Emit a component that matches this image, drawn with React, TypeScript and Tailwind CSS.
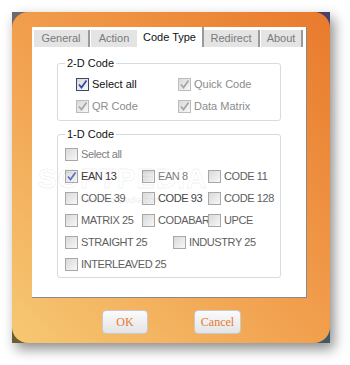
import React from "react";

type Box = "off" | "on" | "dim" | "soft";

function Check({ state }: { state: Box }) {
  const border =
    state === "on" ? "border-[#3c4a63]" : state === "dim" ? "border-[#bcbcbc]" : "border-[#a8a8a8]";
  const stroke = state === "on" ? "#2a4aa6" : state === "soft" ? "#5b72c0" : "#a4a4a4";
  return (
    <span
      className={`flex h-[13px] w-[13px] shrink-0 items-center justify-center border ${border} bg-[linear-gradient(135deg,#d9d9d9,#f7f7f7)]`}
    >
      {state !== "off" && (
        <svg width="11" height="11" viewBox="0 0 11 11">
          <polyline points="2,5.5 4.5,8.5 9.5,1.5" fill="none" stroke={stroke} strokeWidth="1.7" />
        </svg>
      )}
    </span>
  );
}

function Item({
  label,
  state = "off",
  color = "text-[#5e5e5e]",
  w,
}: {
  label: string;
  state?: Box;
  color?: string;
  w: string;
}) {
  return (
    <div className={`flex h-[22px] items-center gap-[3px] ${w}`}>
      <Check state={state} />
      <span className={`whitespace-nowrap ${color}`}>{label}</span>
    </div>
  );
}

const tabs = ["General", "Action", "Code Type", "Redirect", "About"];
const tabW = ["w-[56px]", "w-[46px]", "w-[67px]", "w-[56px]", "w-[42px]"];

export default function App() {
  return (
    <div className="relative h-[365px] w-[350px] overflow-hidden bg-white pl-[12px] pt-[12px] font-['Liberation_Sans',Arial,sans-serif] text-[11px]">
      <div className="h-[331px] w-[318px] bg-[conic-gradient(#4a3f6b_0_25%,#3f5a66_25%_50%,#6b5d2e_50%_75%,#6b6b6b_75%)] shadow-[4px_6px_12px_rgba(0,0,0,0.45)]">
        <div className="flex h-full flex-col rounded-[16px] bg-[linear-gradient(45deg,#f6c873_0%,#f2a250_45%,#e97a2c_100%)] pl-[20px] pr-[23px] pt-[15px]">
          <div className="flex h-[271px] flex-col border-b border-r border-[#8a8a8a] bg-white">
            <div className="flex h-[20px] items-end pl-[2px]">
              {tabs.map((t, i) => {
                const active = i === 2;
                return (
                  <div
                    key={t}
                    className={`flex ${tabW[i]} items-center justify-center ${
                      active
                        ? "h-[20px] border-r-2 border-[#9a9a9a] bg-white text-[#111]"
                        : `h-[17px] bg-[#e4e4e4] text-[#7a7a7a] ${i === 1 ? "" : "border-r-2 border-[#9a9a9a]"}`
                    } ${i === 0 || i === 3 ? "mr-[1px]" : ""}`}
                  >
                    {t}
                  </div>
                );
              })}
            </div>

            <div className="relative flex flex-1 flex-col pl-[25px]">
              <fieldset className="mt-[10px] w-[224px] rounded-[3px] border border-[#d3dce2] pb-[3px] pl-[18px]">
                <legend className="ml-[-11px] px-[2px] leading-[13px] text-[#111]">2-D Code</legend>
                <div className="pt-[3px]">
                  <div className="flex">
                    <Item label="Select all" state="on" color="text-[#111]" w="w-[102px]" />
                    <Item label="Quick Code" state="dim" color="text-[#8c8c8c]" w="" />
                  </div>
                  <div className="flex">
                    <Item label="QR Code" state="dim" color="text-[#8c8c8c]" w="w-[102px]" />
                    <Item label="Data Matrix" state="dim" color="text-[#8c8c8c]" w="" />
                  </div>
                </div>
              </fieldset>

              <fieldset className="mt-[7px] w-[224px] rounded-[3px] border border-[#d3dce2] pb-[2px] pl-[7px] tracking-[-0.4px]">
                <legend className="ml-[0px] px-[2px] leading-[13px] tracking-normal text-[#111]">1-D Code</legend>
                <div className="pt-[2px]">
                  <Item label="Select all" color="text-[#808080]" w="" />
                  <div className="flex">
                    <Item label="EAN 13" state="soft" color="text-[#3a3a3a]" w="w-[77px]" />
                    <Item label="EAN 8" color="text-[#808080]" w="w-[66px]" />
                    <Item label="CODE 11" w="" />
                  </div>
                  <div className="flex">
                    <Item label="CODE 39" w="w-[77px]" />
                    <Item label="CODE 93" color="text-[#444]" w="w-[66px]" />
                    <Item label="CODE 128" w="" />
                  </div>
                  <div className="flex">
                    <Item label="MATRIX 25" w="w-[77px]" />
                    <Item label="CODABAR" w="w-[66px]" />
                    <Item label="UPCE" w="" />
                  </div>
                  <div className="flex">
                    <Item label="STRAIGHT 25" w="w-[108px]" />
                    <Item label="INDUSTRY 25" w="" />
                  </div>
                  <Item label="INTERLEAVED 25" w="" />
                </div>
              </fieldset>
            </div>
          </div>

          <div className="mt-[12px] flex gap-[46px] pl-[70px] font-['Liberation_Serif',serif] text-[12px] text-[#e27a32]">
            <button className="flex h-[24px] w-[46px] items-center justify-center rounded-[4px] border border-[#c9c9c9] bg-[linear-gradient(#fbfbfb,#e4e4e4)]">
              OK
            </button>
            <button className="flex h-[24px] w-[47px] items-center justify-center rounded-[4px] border border-[#c9c9c9] bg-[linear-gradient(#fbfbfb,#e4e4e4)]">
              Cancel
            </button>
          </div>
        </div>
      </div>

      <div className="pointer-events-none absolute left-[38px] top-[158px] text-[28px] font-bold tracking-[1px] text-transparent [-webkit-text-stroke:1px_rgba(0,0,0,0.07)]">
        SOFTPEDIA
      </div>
      <div className="pointer-events-none absolute left-[84px] top-[194px] text-[9px] text-[rgba(0,0,0,0.1)]">
        www.softpedia.com
      </div>
    </div>
  );
}
